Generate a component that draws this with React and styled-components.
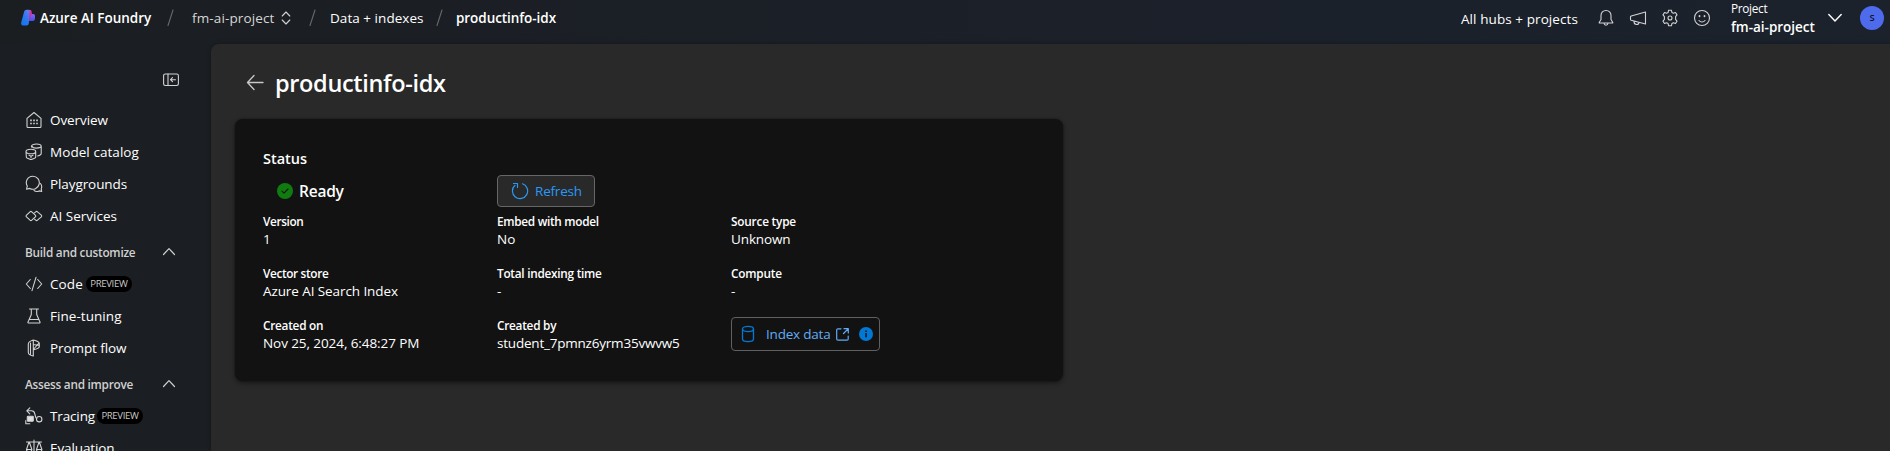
import React from 'react';
import styled, { createGlobalStyle } from 'styled-components';

const GlobalStyle = createGlobalStyle`
  * { box-sizing: border-box; }
  html, body { margin: 0; height: 100%; overflow: hidden; }
  body { background: #1b1e22; font-family: 'Open Sans', 'Noto Sans', sans-serif; color: #fff; }
`;

const Page = styled.div`
  display: flex;
  flex-direction: column;
  height: 451px;
  background: linear-gradient(90deg, #1b1e21 0%, #1b2029 55%, #1b222c 100%);
`;

const Text = styled.span`
  display: block;
  white-space: nowrap;
  font-size: ${(p) => p.$size || 13.5}px;
  font-weight: ${(p) => (p.$bold ? 640 : 400)};
  line-height: ${(p) => p.$line || 20}px;
  letter-spacing: ${(p) => p.$track || 0}px;
  color: ${(p) => p.$color || 'inherit'};
`;

/* Header */
const Header = styled.header`
  display: flex;
  flex: none;
  height: 44px;
  padding: 0 6px 0 20px;
`;
const Crumbs = styled.nav`
  display: flex;
  height: 36px;
  align-items: center;
`;
const Crumb = styled.div`
  display: flex;
  align-items: center;
  gap: ${(p) => p.$gap || 0}px;
  width: ${(p) => p.$width}px;
`;
const HeaderRight = styled.div`
  display: flex;
  height: 36px;
  align-items: center;
  margin-left: auto;
`;
const HubsLink = styled.div`
  width: 136px;
  padding-top: 2px;
`;
const HeaderIcons = styled.div`
  display: flex;
  gap: 14px;
  width: 134px;
`;
const ProjectPicker = styled.div`
  display: flex;
  flex-direction: column;
  width: 97px;
  height: 36px;
`;
const Avatar = styled.div`
  display: flex;
  align-items: center;
  justify-content: center;
  width: 24px;
  height: 24px;
  margin-left: 18px;
  border-radius: 50%;
  background: #4f6bed;
  color: #10131c;
`;

/* Sidebar */
const Body = styled.div`
  display: flex;
  flex: 1;
  min-height: 0;
`;
const Sidebar = styled.aside`
  width: 211px;
  flex: none;
  overflow: hidden;
  background: #1b1e22;
`;
const CollapseRow = styled.div`
  display: flex;
  justify-content: flex-end;
  height: 60px;
  padding: 29px 32px 0 0;
`;
const NavItem = styled.div`
  display: flex;
  align-items: center;
  height: 32px;
  padding-left: 25px;
  gap: 7px;
`;
const NavGroup = styled.div`
  display: flex;
  align-items: center;
  justify-content: space-between;
  height: 36px;
  padding: 3px 35px 0 25px;
`;
const Badge = styled.span`
  display: flex;
  align-items: center;
  justify-content: center;
  height: 16px;
  width: 46px;
  margin-left: ${(p) => p.$offset}px;
  border-radius: 8px;
  background: #000;
`;

/* Main */
const Main = styled.main`
  flex: 1;
  padding-left: 24px;
  border-top-left-radius: 8px;
  background: #292929;
  box-shadow: 0 0 4px rgba(0, 0, 0, 0.3);
`;
const TitleRow = styled.div`
  display: flex;
  align-items: center;
  height: 75px;
  padding: 3px 0 0 10px;
  gap: 10px;
`;
const Card = styled.section`
  width: 828px;
  height: 262px;
  padding: 30px 28px;
  border-radius: 8px;
  background: #121212;
  box-shadow: 0 2px 5px rgba(0, 0, 0, 0.45), 0 0 2px rgba(0, 0, 0, 0.4);
`;
const StatusRow = styled.div`
  display: grid;
  grid-template-columns: 234px 234px 1fr;
  align-items: center;
  height: 44px;
`;
const Ready = styled.div`
  display: flex;
  align-items: center;
  gap: 5px;
  padding-left: 13px;
`;
const Button = styled.button`
  display: flex;
  align-items: center;
  font-family: inherit;
  width: ${(p) => p.$width}px;
  height: ${(p) => p.$height}px;
  padding: 0 0 0 ${(p) => p.$left}px;
  border: 1px solid ${(p) => p.$border};
  border-radius: 4px;
  background: ${(p) => p.$bg};
`;
const Details = styled.div`
  display: grid;
  grid-template-columns: 234px 234px 1fr;
  grid-auto-rows: 52px;
`;
const Spacer = styled.span`
  width: ${(p) => p.$w}px;
  flex: none;
`;

const Icon = styled.svg.attrs({ fill: 'none' })`
  display: block;
  flex: none;
  width: ${(p) => p.$w || 18}px;
  height: ${(p) => p.$h || p.$w || 18}px;
  stroke: ${(p) => p.$color || '#d2d2d2'};
  stroke-width: ${(p) => p.$stroke || 1.1};
  stroke-linecap: round;
  stroke-linejoin: round;
`;

const Slash = () => (
  <Icon $w={7} $h={18} viewBox="0 0 7 18" $color="#666a6e"><path d="M6 1 1 16.5" /></Icon>
);

const Logo = () => (
  <Icon $w={16} $h={18} viewBox="0 0 16 18" $color="none">
    <defs>
      <linearGradient id="lgBlue" x1="0" y1="1" x2="0.7" y2="0"><stop offset="0" stopColor="#0a78ee" /><stop offset="0.6" stopColor="#2f78f0" /><stop offset="1" stopColor="#5c7cf0" /></linearGradient>
      <linearGradient id="lgPink" x1="0" y1="0" x2="0" y2="1"><stop offset="0" stopColor="#e0389a" /><stop offset="1" stopColor="#b321b0" /></linearGradient>
      <linearGradient id="lgViolet" x1="0" y1="0" x2="0" y2="1"><stop offset="0" stopColor="#9a5cf0" /><stop offset="1" stopColor="#3657e8" /></linearGradient>
    </defs>
    <path d="M9 5h4.200c1.100 0 1.800.8 1.800 1.900v2.600c0 1.500-1 2.600-2.500 2.600H9z" fill="url(#lgViolet)" />
    <path d="M7 1h3.100c.8 0 1.200.5 1.400 1.300l.7 3.700c-1.200 0-1.700.8-1.700 1.800v3L8.500 12z" fill="url(#lgPink)" />
    <path d="M9.800 1.100C9 .8 6.600.8 5.700 1 4.900 1.200 4.400 1.800 4.100 2.700L1.200 13.600C.8 15.200 1.500 16.500 3 16.500H6.500C8 16.500 8.600 15.600 8.800 14.500L9.500 5.500C9.500 3.700 9 2 9.800 1.100z" fill="url(#lgBlue)" />
  </Icon>
);

const icons = {
  overview: <><path d="M2 7.300 9 1.500l7 5.800v8.200c0 .6-.4 1-1 1H3c-.6 0-1-.4-1-1z" /><path d="M5.200 9.300h1.600M8.200 9.300h1.600M11.200 9.300h1.600M5.200 12.500h1.600M8.200 12.500h1.600M11.200 12.500h1.600" strokeWidth="1.700" strokeLinecap="butt" /></>,
  catalog: <><path d="M6.500 4V3.200C6.800 1.800 9 1 11.500 1s4.700 1 4.700 2.200v7.300c0 1.200-1.500 2-3.500 2.500M7 3.200c.5 1.300 2.200 1.900 4.500 1.900s4.500-.7 4.700-1.900M1 8.500l.3 5.300c0 .5.300.9.700 1.100l3.400 1.500c.4.200.8.200 1.200 0l3.400-1.500c.4-.2.700-.6.700-1.100V8.500M1 8.500c0-1.400 2-2.300 4.900-2.300s4.800.9 4.800 2.300-2 2.300-4.800 2.300S1 9.900 1 8.500zM4 12.300l2 .9 2-.9M6 13.200v1.500" /></>,
  playgrounds: <><path d="M7.700 1.200a6.500 6.500 0 1 1-3 12.200l-3.200.8.800-3.100A6.500 6.500 0 0 1 7.700 1.200z" /><path d="M15.500 8.500c1.400 1.800 1.500 3.600.7 5.200l.5 2.700-2.700-.5c-1.700.9-3.500.7-5-.4" /></>,
  services: <><path d="M6.800 13.200c-.6.500-1.200.5-1.800 0L1.500 9.900c-.6-.6-.6-1.200 0-1.800L5 4.800c.6-.5 1.200-.5 1.800 0l3.500 3.300c.6.600.6 1.200 0 1.800z" /><path d="m9.500 5.800 1.200-1c.6-.5 1.200-.5 1.800 0L16.300 8.100c.6.600.6 1.200 0 1.800l-3.800 3.300c-.6.500-1.200.5-1.800 0l-1.200-1" /></>,
  code: <path d="M5.300 4.500 1.300 9l4 4.500M12.700 4.500l4 4.500-4 4.500M11 2.300 7 15.700" />,
  tuning: <path d="M4.500 2h9M6.300 2v5.500L3.700 13.500 3 15c-.2.600 0 1 .7 1h10.600c.7 0 .9-.4.700-1l-.7-1.500L11.700 7.500V2M4.200 12.500h9.600" />,
  flow: <><path d="M8.300 1v16M8.300 1C5 2 3.300 3.300 3.300 5v8.500c0 1.500 2 2.800 5 3.500M5.500 4v11M8.300 1c3.500.8 6 2.200 6 3.500v3c0 1.200-2 2.500-6 3.300M8.300 5.500l6 1M8.300 10.500 14 4" /></>,
  tracing: <><path d="M1.800 3.800h4.700c1.700 0 3 1.200 3.300 3l.8 3.200c.2.900.6 1.300 1 1.500M4.800.8l-3 3 3 3" /><rect x="2.300" y="9.300" width="6" height="5" rx=".8" fill="#e0e0e0" /><path d="M.8 13.500v3.300h4" /><circle cx="14.200" cy="12.200" r="2.700" /></>,
  evaluation: <path d="M9 1v16M1.500 3h15M4 3 1.500 10.500h5.400L4.300 3M14 3l-2.500 7.500h5.400L14.300 3M1.500 10.500c0 3 5.300 3 5.300 0M11.500 10.500c0 3 5.300 3 5.300 0M6 16.500h6" />,
};

const Nav = ({ icon, label, track, badge, offset }) => (
  <NavItem>
    <Icon viewBox="0 0 18 18">{icons[icon]}</Icon>
    <Text $track={track}>{label}</Text>
    {badge && <Badge $offset={offset}><Text $size={9.6} $line={14} $track={-0.35} $color="#c8c8c8">PREVIEW</Text></Badge>}
  </NavItem>
);

const Group = ({ label, track }) => (
  <NavGroup>
    <Text $size={11.8} $bold $track={track} $color="#d0d0d0">{label}</Text>
    <Icon $w={14} $h={9} viewBox="0 0 14 9" $stroke={1.2}><path d="M1.500 7.500 7 1.700l5.500 5.800" /></Icon>
  </NavGroup>
);

const Field = ({ label, value, lt, vt }) => (
  <div>
    <Text $size={11.8} $bold $line={17} $track={lt}>{label}</Text>
    <Text $line={18} $track={vt}>{value}</Text>
  </div>
);

export default function App() {
  return (
    <Page>
      <GlobalStyle />
      <Header>
        <Crumbs>
          <Crumb $width={147} $gap={4}><Logo /><Text $bold $track={-0.03}>Azure AI Foundry</Text></Crumb>
          <Crumb $width={25}><Slash /></Crumb>
          <Crumb $width={117} $gap={6}>
            <Text $track={0.13} $color="#d6d6d6">fm-ai-project</Text>
            <Icon $w={10} $h={14} viewBox="0 0 10 14"><path d="M1.200 5 5 1l3.800 4M1.200 9 5 13l3.800-4" /></Icon>
          </Crumb>
          <Crumb $width={21}><Slash /></Crumb>
          <Crumb $width={106}><Text $track={0.04}>Data + indexes</Text></Crumb>
          <Crumb $width={20}><Slash /></Crumb>
          <Text $bold $track={-0.06}>productinfo-idx</Text>
        </Crumbs>
        <HeaderRight>
          <HubsLink><Text $track={0.08}>All hubs + projects</Text></HubsLink>
          <HeaderIcons>
            <Icon viewBox="0 0 18 18"><path d="M9 1.500c3 0 5 2.200 5 5v4l1.800 3c.1.300 0 .5-.4.500H2.600c-.4 0-.5-.2-.4-.5L4 10.500v-4c0-2.800 2-5 5-5zM7 14.200c.2 1.300 1 2 2 2s1.800-.7 2-2" /></Icon>
            <Icon viewBox="0 0 18 18"><path d="M16.500 3v12L2.200 11.300c-.5-.2-.7-.5-.7-1V8c0-.5.2-.8.700-1zM5 12.200c0 2 1 3.300 2.500 3.300s2.500-1 2.500-2" /></Icon>
            <Icon viewBox="0 0 18 18"><path d="M7.600 1.200h2.800l.5 2.200 1.500.8 2.100-.7 1.500 2.400L14.600 7.600v2.800l1.400 1.700-1.500 2.400-2.100-.7-1.500.8-.5 2.200H7.600l-.5-2.200-1.500-.8-2.100.7L2 12.100l1.400-1.700V7.600L2 5.900l1.500-2.400 2.100.7 1.500-.8z" /><circle cx="9" cy="9" r="2" /></Icon>
            <Icon viewBox="0 0 18 18"><circle cx="9" cy="9" r="7.500" /><path d="M6 11.500c1.500 1.900 4.500 1.900 6 0" /><path d="M6.500 7v.3M11.500 7v.3" strokeWidth="1.800" /></Icon>
          </HeaderIcons>
          <ProjectPicker>
            <Text $size={11.8} $line={17} $track={-0.3}>Project</Text>
            <Text $bold $line={21} $track={-0.02}>fm-ai-project</Text>
          </ProjectPicker>
          <Icon $w={14} $h={10} viewBox="0 0 14 10" $color="#fff" $stroke={1.4}><path d="M.8 1.500 7 8l6.200-6.500" /></Icon>
          <Avatar><Text $size={9.5} $bold $line={12}>S</Text></Avatar>
        </HeaderRight>
      </Header>
      <Body>
        <Sidebar>
          <CollapseRow>
            <Icon $w={16} $h={14} viewBox="0 0 16 14"><rect x=".6" y="1" width="14.800" height="11.500" rx="1.700" /><path d="M5 1v11.500M12.500 6.700H7.500M9.500 4.700l-2 2 2 2" /></Icon>
          </CollapseRow>
          <Nav icon="overview" label="Overview" track={-0.07} />
          <Nav icon="catalog" label="Model catalog" track={0.06} />
          <Nav icon="playgrounds" label="Playgrounds" track={-0.09} />
          <Nav icon="services" label="AI Services" />
          <Group label="Build and customize" track={-0.24} />
          <Nav icon="code" label="Code" track={0.1} badge offset={-4} />
          <Nav icon="tuning" label="Fine-tuning" track={0.05} />
          <Nav icon="flow" label="Prompt flow" track={-0.08} />
          <Group label="Assess and improve" track={-0.26} />
          <Nav icon="tracing" label="Tracing" track={-0.14} badge offset={-5} />
          <Nav icon="evaluation" label="Evaluation" track={-0.11} />
        </Sidebar>
        <Main>
          <TitleRow>
            <Icon $w={20} $h={18} viewBox="0 0 20 18" $stroke={1.3} $color="#c8c8c8"><path d="M18 8.500H3M9 1.500 2.500 8.500 9 15.500" /></Icon>
            <Text $size={23.5} $bold $line={32} $track={-0.34}>productinfo-idx</Text>
          </TitleRow>
          <Card>
            <Text $size={14.5} $bold>Status</Text>
            <StatusRow>
              <Ready>
                <Icon $w={18} viewBox="0 0 18 18" $color="#0b1a0b"><circle cx="9" cy="9" r="8" fill="#107c10" stroke="none" /><path d="m6 9.200 2 2 4-4.200" /></Icon>
                <Text $size={15.5} $bold $track={-0.22}>Ready</Text>
              </Ready>
              <Button $width={98} $height={32} $left={13} $border="#666" $bg="#292929">
                <Icon $w={18} viewBox="0 0 18 18" $color="#2899f5" $stroke={1.2}><path d="M11.500 1.800A7.600 7.600 0 1 1 4 3.300M2.500 1.500h4v4" /></Icon>
                <Spacer $w={6} />
                <Text $color="#2899f5" $track={-0.2}>Refresh</Text>
              </Button>
            </StatusRow>
            <Details>
              <Field label="Version" value="1" lt={-0.35} />
              <Field label="Embed with model" value="No" lt={-0.29} />
              <Field label="Source type" value="Unknown" lt={-0.2} vt={-0.12} />
              <Field label="Vector store" value="Azure AI Search Index" lt={-0.35} vt={-0.09} />
              <Field label="Total indexing time" value="-" lt={-0.26} />
              <Field label="Compute" value="-" lt={-0.2} />
              <Field label="Created on" value="Nov 25, 2024, 6:48:27 PM" lt={-0.25} vt={-0.08} />
              <Field label="Created by" value="student_7pmnz6yrm35vwvw5" lt={-0.25} vt={-0.21} />
              <Button $width={149} $height={34} $left={9} $border="#606060" $bg="transparent">
                <Icon $w={14} $h={18} viewBox="0 0 14 18" $color="#0078d4" $stroke={1.3}><ellipse cx="7" cy="4" rx="5.500" ry="2.600" /><path d="M1.500 4v10c0 1.500 2.500 2.600 5.500 2.600s5.500-1.100 5.500-2.600V4" /></Icon>
                <Spacer $w={11} />
                <Text $color="#62abf5" $track={-0.2}>Index data</Text>
                <Spacer $w={5} />
                <Icon $w={13} viewBox="0 0 13 13" $color="#62abf5" $stroke={1.2}><path d="M5 .8H2C1.200.8.700 1.300.700 2v9c0 .7.500 1.200 1.300 1.200h9c.8 0 1.200-.5 1.200-1.200V8M8 .7h4.300V5M12 1 7.500 5.500" /></Icon>
                <Spacer $w={10} />
                <Icon $w={14} viewBox="0 0 14 14" $color="none"><circle cx="7" cy="7" r="7" fill="#0078d4" /><path d="M6.300 6h1.500v4.200H6.300zM6.300 3.500h1.500v1.500H6.300z" fill="#121212" /></Icon>
              </Button>
            </Details>
          </Card>
        </Main>
      </Body>
    </Page>
  );
}
